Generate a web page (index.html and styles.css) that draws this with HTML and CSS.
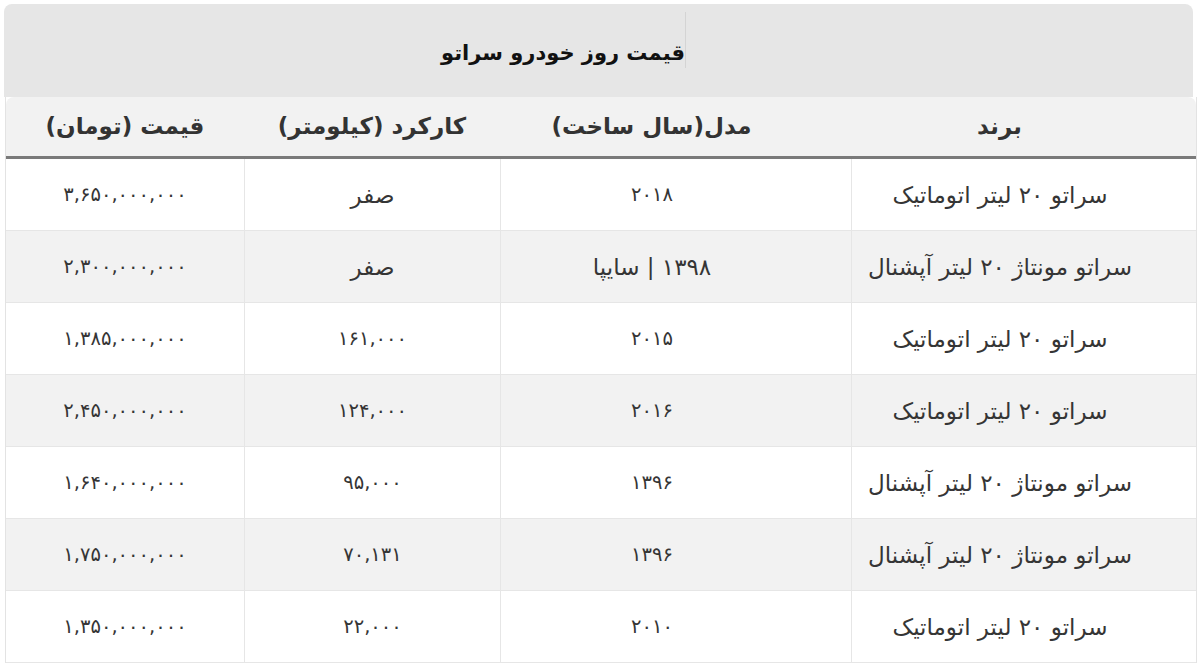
FILE: index.html
```html
<!DOCTYPE html>
<html lang="fa" dir="rtl">
<head>
<meta charset="utf-8">
<title>قیمت روز خودرو سراتو</title>
<link rel="stylesheet" href="styles.css">
</head>
<body>
<div class="wrap">
  <div class="title"><span class="title-text">قیمت روز خودرو سراتو</span></div>
  <table class="prices">
    <colgroup>
      <col class="c-brand">
      <col class="c-model">
      <col class="c-km">
      <col class="c-price">
    </colgroup>
    <thead>
      <tr>
        <th class="brand">برند</th>
        <th class="model">مدل(سال ساخت)</th>
        <th>کارکرد (کیلومتر)</th>
        <th>قیمت (تومان)</th>
      </tr>
    </thead>
    <tbody>
      <tr><td class="brand">سراتو ۲۰ لیتر اتوماتیک</td><td class="model num">۲۰۱۸</td><td>صفر</td><td class="num">۳,۶۵۰,۰۰۰,۰۰۰</td></tr>
      <tr><td class="brand">سراتو مونتاژ ۲۰ لیتر آپشنال</td><td class="model">۱۳۹۸ | سایپا</td><td>صفر</td><td class="num">۲,۳۰۰,۰۰۰,۰۰۰</td></tr>
      <tr><td class="brand">سراتو ۲۰ لیتر اتوماتیک</td><td class="model num">۲۰۱۵</td><td class="num">۱۶۱,۰۰۰</td><td class="num">۱,۳۸۵,۰۰۰,۰۰۰</td></tr>
      <tr><td class="brand">سراتو ۲۰ لیتر اتوماتیک</td><td class="model num">۲۰۱۶</td><td class="num">۱۲۴,۰۰۰</td><td class="num">۲,۴۵۰,۰۰۰,۰۰۰</td></tr>
      <tr><td class="brand">سراتو مونتاژ ۲۰ لیتر آپشنال</td><td class="model num">۱۳۹۶</td><td class="num">۹۵,۰۰۰</td><td class="num">۱,۶۴۰,۰۰۰,۰۰۰</td></tr>
      <tr><td class="brand">سراتو مونتاژ ۲۰ لیتر آپشنال</td><td class="model num">۱۳۹۶</td><td class="num">۷۰,۱۳۱</td><td class="num">۱,۷۵۰,۰۰۰,۰۰۰</td></tr>
      <tr><td class="brand">سراتو ۲۰ لیتر اتوماتیک</td><td class="model num">۲۰۱۰</td><td class="num">۲۲,۰۰۰</td><td class="num">۱,۳۵۰,۰۰۰,۰۰۰</td></tr>
    </tbody>
  </table>
</div>
</body>
</html>
```
FILE: styles.css
```css
html, body {
  margin: 0;
  padding: 0;
  background: #ffffff;
}
body {
  font-family: "DejaVu Sans", "Noto Sans", sans-serif;
  color: #353535;
}
.wrap {
  padding: 4px 3px 0 5px;
}
.title {
  height: 93px;
  background: #e6e6e6;
  border-radius: 8px 8px 0 0;
  margin-left: -1px;
  margin-right: 4px;
  padding-right: 70px;
  display: flex;
  justify-content: center;
  align-items: flex-start;
}
.title-text {
  font-size: 21px;
  font-weight: bold;
  color: #111;
  margin-top: 8px;
  padding: 29px 0 3px 0;
  border-right: 1px solid #d4d4d4;
}
.prices {
  width: 100%;
  border-collapse: separate;
  border-spacing: 0;
  table-layout: fixed;
  border-left: 1px solid #e3e3e3;
  border-right: 1px solid #e3e3e3;
}
.c-brand { width: 345px; }
.c-model { width: 351px; }
.c-km { width: 256px; }
.c-price { width: auto; }
.prices th {
  height: 57px;
  background: #f2f2f2;
  font-size: 23px;
  font-weight: bold;
  color: #333;
  text-align: center;
  border-bottom: 3px solid #7a7a7a;
  padding: 0 0 2px 0;
}
.prices thead th:first-child { border-top-right-radius: 8px; }
.prices thead th:last-child { border-top-left-radius: 8px; }
.prices td {
  height: 71px;
  font-size: 23px;
  text-align: center;
  padding: 0;
  border-bottom: 1px solid #e6e6e6;
  border-left: 1px solid #e6e6e6;
}
.prices td.num {
  font-size: 19.5px;
}
.prices td:last-child { border-left: none; }
.prices tbody tr:nth-child(even) td { background: #f2f2f2; }
.prices .brand, .prices .model { padding-right: 48px; }
```
